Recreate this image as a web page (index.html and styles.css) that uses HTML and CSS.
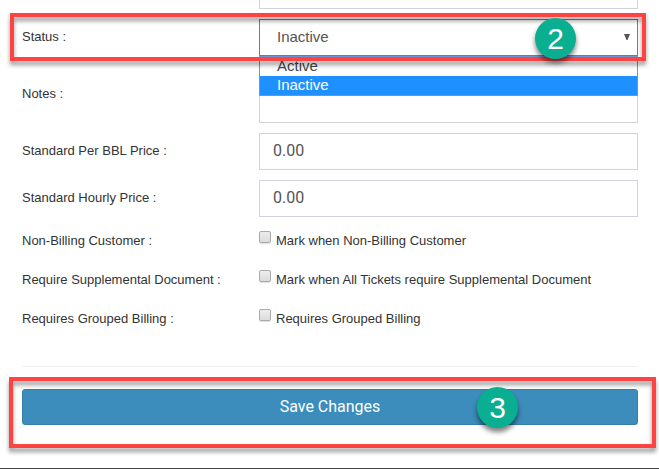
FILE: index.html
```html
<!DOCTYPE html>
<html lang="en">
<head>
    <meta charset="UTF-8">
    <meta name="viewport" content="width=device-width, initial-scale=1.0">
    <title>Customer</title>
    <link rel="stylesheet" href="styles.css">
</head>
<body>
<form class="customer-form">
    <div class="row">
        <span></span>
        <input class="field cut" type="text" aria-label="Address">
    </div>

    <div class="row status-row">
        <label class="name" for="status">Status :</label>
        <div class="select-wrap">
            <select class="field" id="status">
                <option>Active</option>
                <option selected>Inactive</option>
            </select>
            <svg class="arrow" viewBox="0 0 6 6"><path d="M0 0h6L3.5 6h-1z"/></svg>
            <ul class="options" role="listbox" aria-label="Status">
                <li role="option">Active</li>
                <li class="selected" role="option" aria-selected="true">Inactive</li>
            </ul>
        </div>
        <div class="highlight"></div>
        <span class="badge">2</span>
    </div>

    <div class="row">
        <label class="name" for="notes">Notes :</label>
        <textarea class="field" id="notes"></textarea>
    </div>

    <div class="row">
        <label class="name" for="bbl">Standard Per BBL Price :</label>
        <input class="field" id="bbl" type="text" value="0.00">
    </div>

    <div class="row">
        <label class="name" for="hourly">Standard Hourly Price :</label>
        <input class="field" id="hourly" type="text" value="0.00">
    </div>

    <div class="checks">
        <div class="row">
            <span>Non-Billing Customer :</span>
            <label class="check"><input type="checkbox">Mark when Non-Billing Customer</label>
        </div>
        <div class="row">
            <span>Require Supplemental Document :</span>
            <label class="check"><input type="checkbox">Mark when All Tickets require Supplemental Document</label>
        </div>
        <div class="row">
            <span>Requires Grouped Billing :</span>
            <label class="check"><input type="checkbox">Requires Grouped Billing</label>
        </div>
    </div>

    <hr>

    <div class="save-row">
        <button class="save" type="submit">Save Changes</button>
        <div class="highlight"></div>
        <span class="badge">3</span>
    </div>
</form>
</body>
</html>
```

FILE: styles.css
```css
*{
    box-sizing: border-box;
    margin: 0;
    padding: 0;
}

body{
    min-height: 100vh;
    border-bottom: 1px solid #444;
    background-color: white;
    color: #333;
    font-family: "Liberation Sans", Arial, sans-serif;
    font-size: 13px;
    line-height: 20px;
    overflow-x: hidden;
}

.customer-form{
    display: flex;
    flex-direction: column;
    gap: 10px;
    padding: 0 21px 22px 22px;
}

.row{
    display: grid;
    grid-template-columns: 237px 1fr;
    align-items: center;
}

.name{
    padding-bottom: 2px;
}

.field{
    display: block;
    width: 100%;
    height: 37px;
    padding: 0 13px 2px;
    border: 1px solid #d2d2de;
    background-color: white;
    color: #555;
    font-family: Roboto, sans-serif;
    font-size: 16px;
    outline: none;
}

textarea.field{
    height: 57px;
    resize: none;
}

.cut{
    height: 9px;
    border-top: none;
}

.status-row,
.select-wrap,
.save-row{
    position: relative;
}

.status-row{
    z-index: 1;
}

select.field{
    appearance: none;
    padding: 0 17px 2px;
    border-color: #3c8dbc;
    font-family: inherit;
    font-size: 15px;
}

.arrow{
    position: absolute;
    top: 15px;
    right: 8px;
    width: 6px;
    height: 6px;
    fill: #555;
}

.options{
    position: absolute;
    top: 100%;
    left: 0;
    right: 0;
    border: 1px solid #7393cf;
    background-color: white;
    color: #444;
    font-size: 15px;
    line-height: 17px;
    list-style: none;
}

.options li{
    padding: 0 17px 2px;
}

.options .selected{
    background-color: #1e90ff;
    color: white;
}

.highlight{
    position: absolute;
    top: -6px;
    right: -8px;
    bottom: -5px;
    left: -12px;
    border: 4px solid #ff4242;
    filter: drop-shadow(0 4px 2px rgba(0, 0, 0, 0.4));
    pointer-events: none;
}

.save-row .highlight{
    top: -12px;
    right: -18px;
    bottom: -23px;
    left: -13px;
}

.badge{
    position: absolute;
    top: -1px;
    right: 62px;
    width: 41px;
    height: 41px;
    border-radius: 50%;
    background-color: #0aae90;
    box-shadow: 0 4px 5px rgba(0, 0, 0, 0.5);
    color: white;
    font-size: 30px;
    line-height: 41px;
    text-align: center;
}

.save-row .badge{
    top: -2px;
    right: 120px;
}

.checks{
    display: flex;
    flex-direction: column;
    gap: 19px;
    padding-top: 4px;
}

.check{
    display: flex;
    gap: 5px;
}

.check input{
    appearance: none;
    width: 12px;
    height: 12px;
    border: 1px solid #aaa;
    border-radius: 2px;
    background: linear-gradient(#ededed, #dcdcdc);
    box-shadow: 0 1px 1px #ddd;
}

hr{
    margin-top: 27px;
    border: none;
    border-top: 1px solid #eee;
}

.save-row{
    margin-top: 12px;
}

.save{
    display: block;
    width: 100%;
    height: 36px;
    padding-bottom: 1px;
    border: 1px solid #367fa9;
    border-radius: 3px;
    background-color: #3c8dbc;
    color: white;
    font-family: Roboto, sans-serif;
    font-size: 16px;
}
```
